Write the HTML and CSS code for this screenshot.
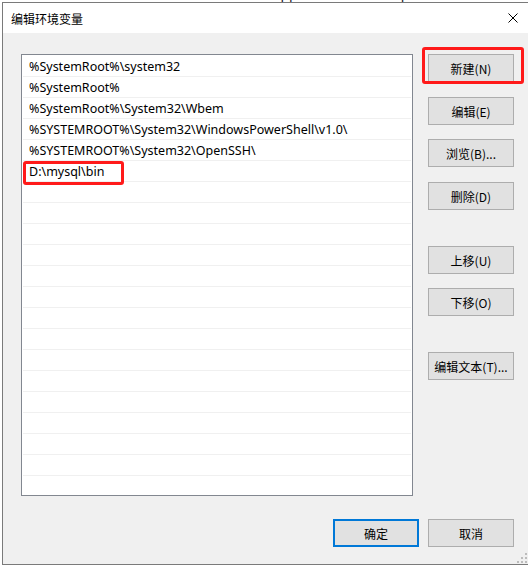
FILE: index.html
```html
<!DOCTYPE html>
<html lang="zh-CN">
<head>
  <meta charset="UTF-8">
  <meta name="viewport" content="width=device-width, initial-scale=1.0">
  <title>编辑环境变量</title>
  <link rel="stylesheet" href="styles.css">
</head>
<body>
  <div class="behind">
    <div class="behind-path">C:\Users\Administrator\AppData\Local\Temp</div>
  </div>
  <div class="dialog">
    <div class="titlebar">
      <span class="title">编辑环境变量</span>
      <svg class="close" width="10" height="10" viewBox="0 0 10 10">
        <path d="M0.5 0.5 L9.5 9.5 M9.5 0.5 L0.5 9.5" stroke="#000" stroke-width="1" fill="none"/>
      </svg>
    </div>
    <div class="content">
      <div class="main">
        <div class="list">
          <div class="row">%SystemRoot%\system32</div>
          <div class="row">%SystemRoot%</div>
          <div class="row">%SystemRoot%\System32\Wbem</div>
          <div class="row">%SYSTEMROOT%\System32\WindowsPowerShell\v1.0\</div>
          <div class="row">%SYSTEMROOT%\System32\OpenSSH\</div>
          <div class="row marked">D:\mysql\bin<span class="mark mark-row"></span></div>
          <div class="row"></div>
          <div class="row"></div>
          <div class="row"></div>
          <div class="row"></div>
          <div class="row"></div>
          <div class="row"></div>
          <div class="row"></div>
          <div class="row"></div>
          <div class="row"></div>
          <div class="row"></div>
          <div class="row"></div>
          <div class="row"></div>
          <div class="row"></div>
          <div class="row"></div>
          <div class="row"></div>
        </div>
        <div class="side">
          <button class="btn marked">新建(N)<span class="mark mark-btn"></span></button>
          <button class="btn">编辑(E)</button>
          <button class="btn gap-s">浏览(B)...</button>
          <button class="btn">删除(D)</button>
          <button class="btn gap-l">上移(U)</button>
          <button class="btn gap-s">下移(O)</button>
          <button class="btn gap-l">编辑文本(T)...</button>
        </div>
      </div>
      <div class="footer">
        <button class="btn default">确定</button>
        <button class="btn">取消</button>
      </div>
    </div>
    <svg class="grip" width="10" height="10" viewBox="0 0 10 10">
      <rect x="8" y="0" width="2" height="2" fill="#bcbcbc"/>
      <rect x="4" y="4" width="2" height="2" fill="#bcbcbc"/>
      <rect x="8" y="4" width="2" height="2" fill="#bcbcbc"/>
      <rect x="0" y="8" width="2" height="2" fill="#bcbcbc"/>
      <rect x="4" y="8" width="2" height="2" fill="#bcbcbc"/>
      <rect x="8" y="8" width="2" height="2" fill="#bcbcbc"/>
    </svg>
  </div>
</body>
</html>
```

FILE: styles.css
```css
html, body {
  margin: 0;
  background: #fff;
  overflow: hidden;
  font-family: "Noto Sans", "Noto Sans CJK SC", sans-serif;
  font-size: 12px;
  color: #000;
}
.behind {
  height: 2px;
  overflow: hidden;
  padding-left: 115px;
}
.behind-path {
  margin-top: -13px;
  font-size: 14px;
  line-height: 16px;
  color: #1a1a2a;
  white-space: nowrap;
}
.dialog {
  position: relative;
  box-sizing: border-box;
  width: 526px;
  height: 563px;
  margin-left: 2px;
  border: 1px solid #7a7a7a;
  border-right: none;
  background: #f0f0f0;
}
.titlebar {
  display: flex;
  align-items: center;
  justify-content: space-between;
  height: 30px;
  padding: 0 10px 0 8px;
  background: #fff;
}
.title {
  font-family: "Noto Sans CJK SC", sans-serif;
  font-size: 12px;
}
.close {
  display: block;
}
.content {
  padding: 21px 0 0 18px;
}
.main {
  display: flex;
  gap: 15px;
}
.list {
  box-sizing: border-box;
  width: 392px;
  height: 442px;
  padding: 1px;
  border: 1px solid #828790;
  background: #fff;
  overflow: hidden;
}
.row {
  position: relative;
  height: 20px;
  line-height: 21px;
  padding-left: 6px;
  font-size: 12.5px;
  border-bottom: 1px solid #f0f0f0;
  white-space: nowrap;
}
.side {
  display: flex;
  flex-direction: column;
  width: 86px;
}
.btn {
  position: relative;
  box-sizing: border-box;
  height: 28px;
  width: 86px;
  margin: 0;
  padding: 0;
  border: 1px solid #adadad;
  background: #e1e1e1;
  font-family: "Noto Sans CJK SC", sans-serif;
  font-size: 12px;
  color: #000;
}
.side .btn + .btn {
  margin-top: 15px;
}
.side .btn.gap-s {
  margin-top: 14px;
}
.side .btn.gap-l {
  margin-top: 36px;
}
.btn.default {
  border: 2px solid #0078d7;
}
.footer {
  display: flex;
  justify-content: flex-end;
  gap: 9px;
  width: 493px;
  margin-top: 23px;
}
.mark {
  position: absolute;
  box-sizing: border-box;
  border: 3px solid #ff1a1a;
  border-radius: 3px;
}
.mark-row {
  top: 0;
  left: 0;
  width: 101px;
  height: 24px;
}
.mark-btn {
  top: -8px;
  left: -7px;
  width: 102px;
  height: 37px;
}
.grip {
  position: absolute;
  right: 1px;
  bottom: 1px;
}
```
